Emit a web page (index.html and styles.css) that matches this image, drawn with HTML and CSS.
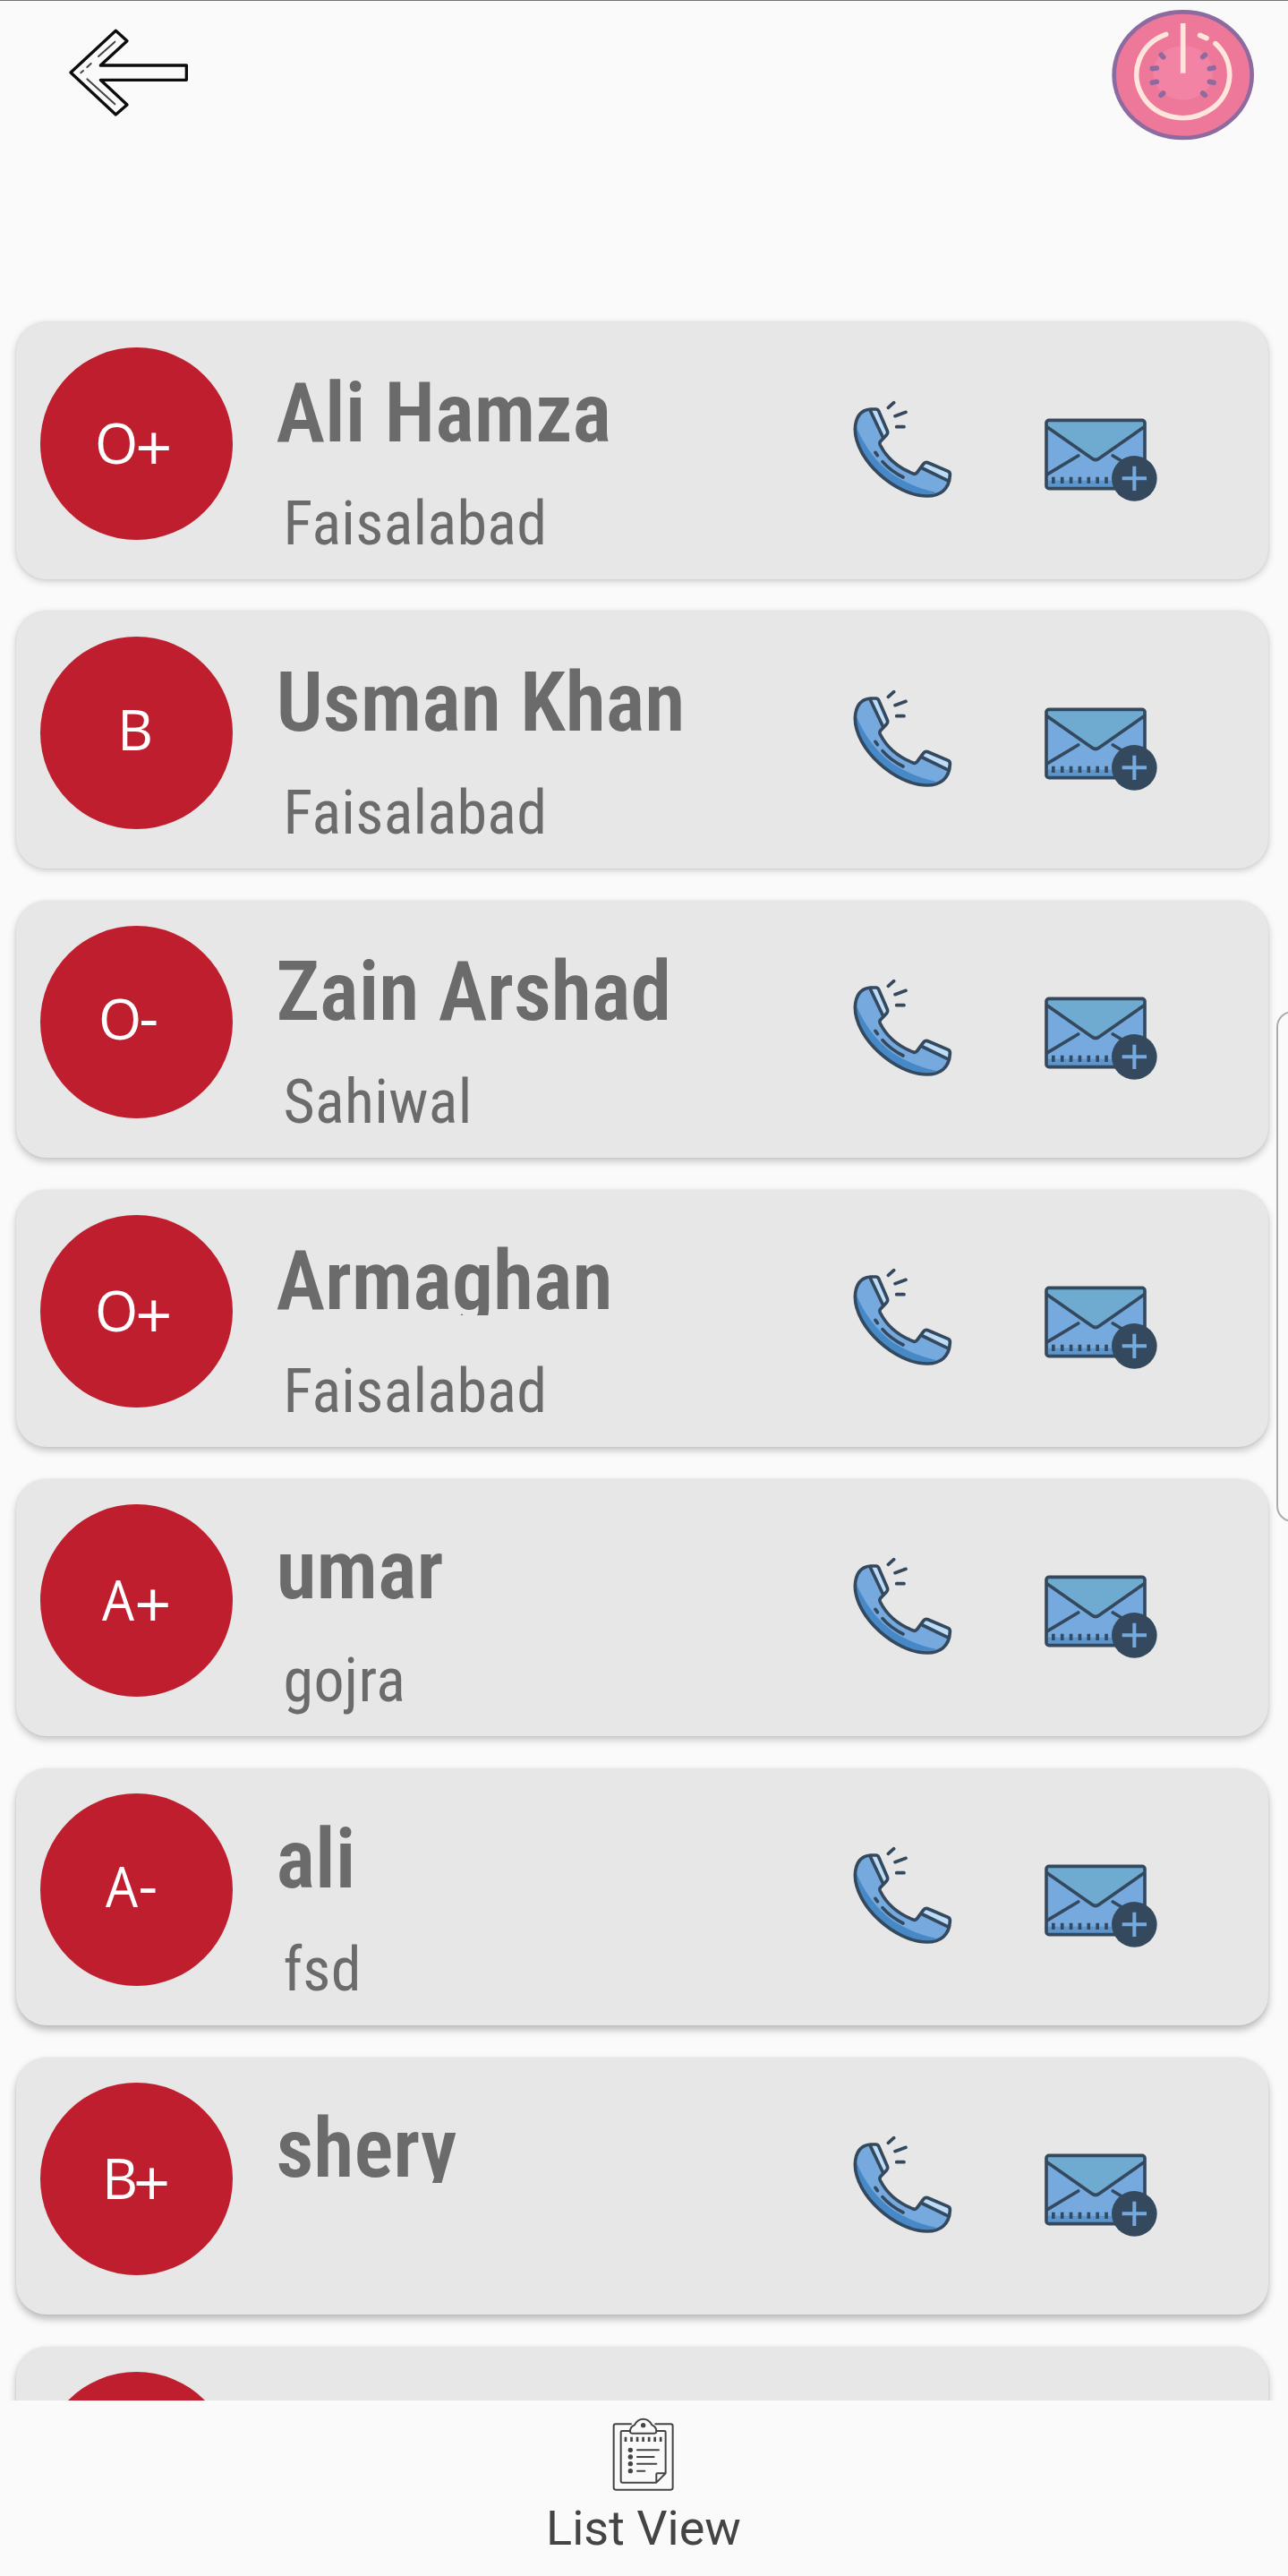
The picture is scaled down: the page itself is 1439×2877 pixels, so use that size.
FILE: index.html
```
<!DOCTYPE html>
<html lang="en">
<head>
<meta charset="utf-8">
<title>Donors</title>
<link rel="stylesheet" href="styles.css">
</head>
<body>
<svg class="defs" aria-hidden="true">
  <symbol id="phone" viewBox="0 0 540 480">
    <path fill="#76a9dd" d="M158 111L182 111L216 190L188 226Q220 294 305 329L342 289L424 324Q430 400 348 402C240 402 108 280 106 178Q110 125 158 111Z"/>
    <path fill="#4788c7" d="M108 165Q150 270 232 330Q300 374 380 390L348 402C240 402 108 280 108 165Z"/>
    <path fill="#bddcf8" d="M160 113L182 111L216 190L202 208ZM342 289L424 324L419 350L330 309Z"/>
    <g fill="none" stroke="#34495e" stroke-width="11" stroke-linecap="round" stroke-linejoin="round">
      <path d="M158 111H176Q182 111 185 117L214 184Q217 192 211 198L191 219Q187 224 190 231Q222 295 298 326Q308 331 314 323L334 296Q341 286 352 291L418 319Q425 322 424 332C422 380 390 402 348 402C240 402 106 280 106 178Q108 115 158 111Z"/>
      <path d="M158 118L200 206M332 309L416 350M174 256L181 266M198 287Q225 318 267 339M217 106L236 89M240 134L276 121M245 170H270"/>
    </g>
  </symbol>
  <symbol id="mail" viewBox="0 0 540 420">
    <rect x="87" y="88" width="330" height="229" rx="8" fill="#76a9dd"/>
    <path fill="#5c95cc" d="M92 290H330V312H92Z"/>
    <path fill="#6fabd0" d="M92 92H413V112L262 217Q252 224 242 217L92 112Z"/>
    <g fill="none" stroke="#34495e" stroke-width="11" stroke-linecap="round" stroke-linejoin="round">
      <rect x="87" y="88" width="330" height="229" rx="9"/>
      <path d="M90 111L240 216Q252 225 264 216L414 111M92 268L194 207M310 207L345 228"/>
    </g>
    <path stroke="#34495e" stroke-width="22" stroke-dasharray="11 18.6" d="M105 289H300"/>
    <circle cx="382" cy="283" r="76" fill="#34495e"/>
    <path d="M341 283H423M382 242V324" stroke="#76a9dd" stroke-width="12"/>
  </symbol>
</svg>

<main class="screen">
  <header class="topbar">
    <svg class="back" viewBox="0 0 540 450" role="img" aria-label="Back">
      <path fill="none" stroke="#0c0c0c" stroke-width="10" stroke-linejoin="round" d="M57 243L208 103L246 137L157 219H445V268H157L246 351L208 384Z"/>
      <path fill="none" stroke="#444" stroke-width="6" stroke-linecap="round" d="M205 140L150 189M125 213L112 225M99 237L91 244M112 265L205 349"/>
    </svg>
    <svg class="power" viewBox="0 0 657 540" role="img" aria-label="Log out">
      <ellipse cx="305" cy="251" rx="231" ry="211" fill="#ed7899" stroke="#8d6a9f" stroke-width="14"/>
      <ellipse cx="305" cy="244" rx="100" ry="91" fill="#f283a5"/>
      <g fill="none" stroke="#ffe6dd" stroke-width="17" stroke-linecap="round">
        <path stroke-linecap="butt" d="M305 78V245"/>
        <path d="M248 115A156 145 0 1 0 414 146M362 118L384 128"/>
      </g>
      <path stroke="#8d6a9f" stroke-width="17" stroke-linecap="round" d="M232 184L239 191M202 230L217 228M202 277L217 274M231 319L239 312M379 184L371 191M408 227L394 230M408 277L394 274M379 319L371 312"/>
    </svg>
  </header>

  <section class="list">
    <article class="card"><div class="badge o-pos"><span>O</span><i class="plus">+</i></div><div class="info"><h2>Ali Hamza</h2><p>Faisalabad</p></div><svg class="phone"><use href="#phone"/></svg><svg class="mail"><use href="#mail"/></svg></article>
    <article class="card"><div class="badge b"><span>B</span></div><div class="info"><h2>Usman Khan</h2><p>Faisalabad</p></div><svg class="phone"><use href="#phone"/></svg><svg class="mail"><use href="#mail"/></svg></article>
    <article class="card"><div class="badge o-neg"><span>O</span><i>-</i></div><div class="info"><h2>Zain Arshad</h2><p>Sahiwal</p></div><svg class="phone"><use href="#phone"/></svg><svg class="mail"><use href="#mail"/></svg></article>
    <article class="card"><div class="badge o-pos"><span>O</span><i class="plus">+</i></div><div class="info"><h2>Armaghan</h2><p>Faisalabad</p></div><svg class="phone"><use href="#phone"/></svg><svg class="mail"><use href="#mail"/></svg></article>
    <article class="card"><div class="badge a-pos"><span>A</span><i class="plus">+</i></div><div class="info"><h2>umar</h2><p>gojra</p></div><svg class="phone"><use href="#phone"/></svg><svg class="mail"><use href="#mail"/></svg></article>
    <article class="card"><div class="badge a-neg"><span>A</span><i>-</i></div><div class="info"><h2>ali</h2><p>fsd</p></div><svg class="phone"><use href="#phone"/></svg><svg class="mail"><use href="#mail"/></svg></article>
    <article class="card"><div class="badge b-pos"><span>B</span><i class="plus">+</i></div><div class="info"><h2>shery</h2></div><svg class="phone"><use href="#phone"/></svg><svg class="mail"><use href="#mail"/></svg></article>
    <article class="card"><div class="badge"></div></article>
  </section>

  <nav class="bottom">
    <svg class="clip" viewBox="310 118 214 256" aria-hidden="true">
      <g fill="none" stroke="#444" stroke-width="6" stroke-linejoin="round" stroke-linecap="round">
        <path d="M376 143H325Q318 143 318 150V356Q318 363 325 363H509Q516 363 516 356V150Q516 143 509 143H458"/>
        <path d="M372 166H346Q342 166 342 170V335Q342 339 346 339H461L492 308V170Q492 166 488 166H462M461 337V311Q461 308 464 308H490"/>
        <path d="M379 174H455Q461 174 461 167Q461 152 446 146C432 120 402 120 388 146Q373 152 373 167Q373 174 379 174Z"/>
        <path d="M397 230H469M397 253H453M397 276H461M397 300H422"/>
      </g>
      <path stroke="#444" stroke-width="16" stroke-dasharray="8 11.6" d="M354 194H482"/>
      <g fill="#444"><circle cx="417" cy="147" r="8"/><circle cx="374" cy="230" r="8"/><circle cx="374" cy="253" r="8"/><circle cx="374" cy="276" r="8"/><circle cx="374" cy="300" r="8"/></g>
    </svg>
    <span class="label">List View</span>
  </nav>
  <div class="edge"></div>
</main>
</body>
</html>
```
FILE: styles.css
```
* { box-sizing: border-box; }
body { margin: 0; background: #fafafa; font-family: Roboto, sans-serif; }
.defs { position: absolute; width: 0; height: 0; }
.screen { position: relative; width: 1439px; height: 2877px; overflow: hidden; display: flex; flex-direction: column; border-top: 1px solid #757575; }
.topbar { flex: 0 0 330px; display: flex; justify-content: space-between; align-items: flex-start; padding-left: 60px; margin-top: -1px; }
.back { width: 180px; height: 150px; }
.power { width: 219px; height: 180px; }

.list { flex: 0 0 2351px; overflow: hidden; padding: 30px 22px 0 18px; display: flex; flex-direction: column; gap: 36px; }
.card { flex: 0 0 287px; display: flex; align-items: flex-start; padding-left: 27px; border-radius: 34px; background: #e7e7e7; box-shadow: 0 2px 8px rgba(0,0,0,.2), 0 0 3px rgba(0,0,0,.08); }
.card:nth-child(n+3) { box-shadow: 0 4px 8px rgba(0,0,0,.22), 0 0 3px rgba(0,0,0,.07); }
.card:nth-child(n+6) { box-shadow: 0 5px 9px rgba(0,0,0,.26), 0 0 3px rgba(0,0,0,.06); }

/* Blood group */
.badge { flex: none; width: 215px; height: 215px; margin-top: 28px; border-radius: 50%; background: #be1e2d; color: #fff; font: 400 62px/1 "Open Sans", sans-serif; display: flex; align-items: baseline; }
.badge i { font-style: normal; font-size: 68px; line-height: 0; margin-left: -3px; }
.badge .plus { font-size: 72px; transform: translateY(8px); }
.o-pos { padding: 75px 0 0 61px; }
.o-neg { padding: 72px 0 0 65px; }
.a-pos { padding: 75px 0 0 69px; }
.a-neg { padding: 72px 0 0 73px; }
.b { padding: 72px 0 0 86px; }
.b-pos { padding: 75px 0 0 69px; }
.a-pos span, .a-neg span { transform: scaleX(.92); transform-origin: left; }
.b-pos i { margin-left: -5px; }

.info { flex: 0 0 642px; padding-left: 48.5px; color: #6b6b6b; font-stretch: 75%; }
.info h2, .info p { margin: 0; white-space: nowrap; }
.info h2 { height: 140px; padding-top: 48px; overflow: hidden; font-size: 92px; line-height: 108px; font-weight: 600; }
.info p { padding: 45px 0 0 8px; font-size: 68px; line-height: 80px; letter-spacing: .35px; }
.phone { flex: none; width: 180px; height: 160px; margin: 60px 0 0 18px; }
.mail { flex: none; width: 180px; height: 140px; margin: 80px 0 0 40px; }

.bottom { flex: 1; display: flex; flex-direction: column; align-items: center; padding-top: 18px; }
.clip { width: 71.3px; height: 85.3px; margin-right: 1px; }
.label { margin: 8px 1px 0 0; font-size: 54px; line-height: 64px; color: #444; }
.edge { position: absolute; left: 1426px; top: 1128px; width: 40px; height: 571px; border: 2px solid #ababab; border-radius: 18px; background: #fafafa; }
```
